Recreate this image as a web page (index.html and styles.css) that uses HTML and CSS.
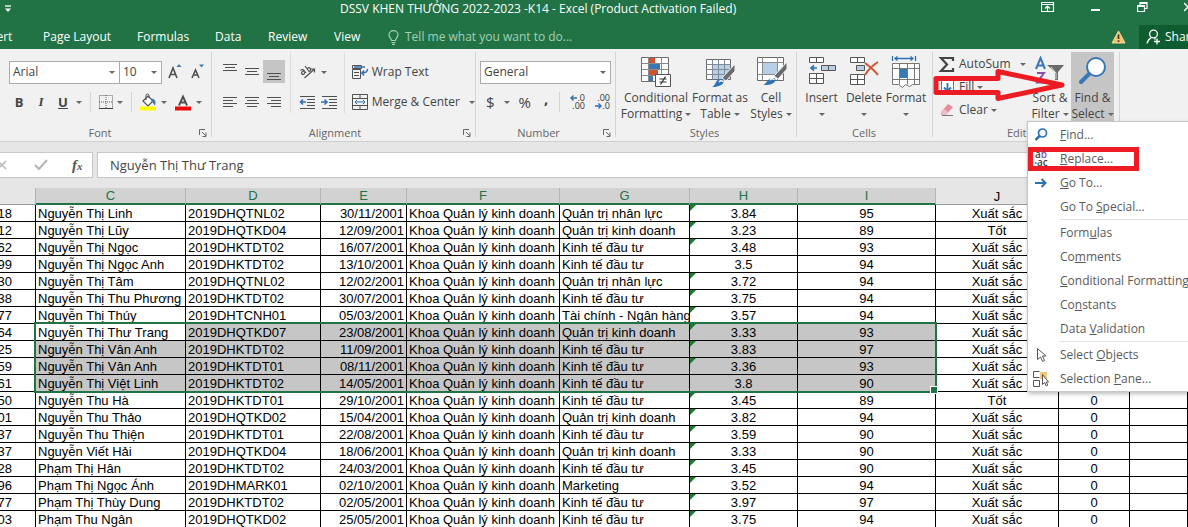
FILE: index.html
```html
<!DOCTYPE html>
<html lang="vi">
<head>
<meta charset="utf-8">
<title>DSSV KHEN THƯỞNG 2022-2023 -K14 - Excel</title>
<link rel="stylesheet" href="styles.css">
</head>
<body>
<header class="top">
  <div class="titlebar">
    <button class="bare qat" aria-label="Customize Quick Access Toolbar"><svg width="8" height="8" viewBox="0 0 8 8"><path d="M1 1h6" stroke="#fff" stroke-width="1.3"/><path d="M1 3.500h6L4 7z" fill="#fff"/></svg></button>
    <h1 class="title">DSSV KHEN THƯỞNG 2022-2023 -K14 - Excel (Product Activation Failed)</h1>
    <div class="winbtns">
      <button class="bare" aria-label="Ribbon display options"><svg width="14" height="12" viewBox="0 0 14 12" fill="none" stroke="#fff"><path d="M.5 1.500h12v9h-12zM.5 3.500h12M6.500 10V5.500M4 7.500l2.500-2.500L9 7.500" stroke-width="1.200"/></svg></button>
      <button class="bare" aria-label="Minimize"><svg width="10" height="12" viewBox="0 0 10 12"><path d="M0 9h9" stroke="#fff" stroke-width="2"/></svg></button>
      <button class="bare" aria-label="Restore"><svg width="11" height="12" viewBox="0 0 11 12" fill="none" stroke="#fff"><path d="M.5 4.500h7v6h-7zM.5 5.500h7M3 4V1.500h7v6H8M3 2.500h7" stroke-width="1.200"/></svg></button>
      <button class="bare" aria-label="Close"><svg width="10" height="12" viewBox="0 0 10 12"><path d="M0 2l8 8M8 2l-8 8" stroke="#fff" stroke-width="1.500"/></svg></button>
    </div>
  </div>
  <nav class="tabs">
    <a class="t-insert" href="#">Insert</a><a class="t-layout" href="#">Page Layout</a><a class="t-formulas" href="#">Formulas</a><a class="t-data" href="#">Data</a><a class="t-review" href="#">Review</a><a class="t-view" href="#">View</a>
    <button class="bare tellme"><svg width="11" height="15" viewBox="0 0 11 15" fill="none" stroke="#a6cfb5"><path d="M3.500 10.500C3.500 8.500 1 7.500 1 4.800a4.500 4.200 0 0 1 9 0c0 2.700-2.500 3.700-2.500 5.700zM3.500 12.500h4M4 14.300h3" stroke-width="1.200"/></svg>Tell me what you want to do...</button>
    <div class="account">
      <svg class="warn" width="15" height="14" viewBox="0 0 15 14"><path d="M7.500 1l6.500 12H1z" fill="#f2c572" stroke="#f6d79b"/><path d="M7.500 4.500v4.500M7.500 10.200v1.700" stroke="#4b3b22" stroke-width="1.700"/></svg>
      <button class="share"><svg width="15" height="16" viewBox="0 0 15 16" fill="none" stroke="#fff" stroke-width="1.300"><circle cx="7.500" cy="5" r="3.900"/><path d="M5.500 8.500C3 10 1.500 11.500 1 14.500M8.500 9.500l1 1M8 12.500h6M11 9.500v6"/></svg>Share</button>
    </div>
  </nav>
</header>

<section class="ribbon">
  <div class="group g-font">
    <div class="row row1">
      <button class="combo fontname">Arial<i class="dd"></i></button><button class="combo fontsize">10<i class="dd"></i></button>
      <button class="bare grow" aria-label="Increase font size"><svg width="14" height="18" viewBox="0 0 14 18"><path d="M1 15L5 5l4 10M2.500 11.500h5" fill="none" stroke="#505050" stroke-width="1.600"/><path d="M8.500 4L11 1l2.500 3z" fill="#3a78b5"/></svg></button>
      <button class="bare shrink" aria-label="Decrease font size"><svg width="14" height="18" viewBox="0 0 14 18"><path d="M1 15l3.500-8L8 15M2.200 12h4.600" fill="none" stroke="#505050" stroke-width="1.600"/><path d="M8 1.500h5L10.500 4.500z" fill="#3a78b5"/></svg></button>
    </div>
    <div class="row row2">
      <button class="bare ltr b">B</button><button class="bare ltr it">I</button><button class="bare ltr u">U</button><i class="dd"></i>
      <i class="vr"></i>
      <button class="bare" aria-label="Borders"><svg width="14" height="14" viewBox="0 0 14 14" fill="none" stroke="#606060"><path d="M.5.5h13v13H.5zM7 0v13M0 7h13" stroke-dasharray="1 1"/><path d="M0 13.500h14" stroke="#404040"/></svg></button><i class="dd"></i>
      <i class="vr"></i>
      <button class="bare" aria-label="Fill color"><svg width="17" height="18" viewBox="0 0 17 18"><path d="M3 8l5-5 5 5-5 5z" fill="#fff" stroke="#505050" stroke-width="1.200"/><path d="M6 7V2.500a1.500 1.500 0 0 1 3 0V5" fill="none" stroke="#505050"/><path d="M11.500 5.500c3 0 5 3 3.500 7-1.500-1-1.500-3-3.500-4z" fill="#3a78b5"/><path d="M0 13.500h16v4H0z" fill="#ff0"/></svg></button><i class="dd"></i>
      <button class="bare" aria-label="Font color"><svg width="17" height="18" viewBox="0 0 17 18"><path d="M4 12.500L8 3.500l4 9M5.500 9.500h5" fill="none" stroke="#505050" stroke-width="1.900"/><path d="M0 13.500h16v4H0z" fill="#e80c0c"/></svg></button><i class="dd"></i>
    </div>
    <div class="label">Font</div>
    <button class="bare launch" aria-label="Font settings"><svg width="8" height="8" viewBox="0 0 8 8" fill="none" stroke="#666"><path d="M.5 6V.5H6M3 3l4 4M7 3.500V7.500H3.500"/></svg></button>
  </div>

  <div class="group g-align">
    <div class="cols">
      <div class="grid3">
        <button class="bare ic" aria-label="Top align"><svg width="15" height="16" viewBox="0 0 15 16" stroke="#505050"><path d="M0 .5h14M2 3.500h10M0 6.500h14"/></svg></button>
        <button class="bare ic" aria-label="Middle align"><svg width="15" height="16" viewBox="0 0 15 16" stroke="#505050"><path d="M0 4.500h14M2 7.500h10M0 10.500h14"/></svg></button>
        <button class="bare ic on" aria-label="Bottom align"><svg width="15" height="16" viewBox="0 0 15 16" stroke="#505050"><path d="M0 9.500h14M2 12.500h10M0 15.500h14"/></svg></button>
        <button class="bare ic" aria-label="Align left"><svg width="15" height="12" viewBox="0 0 15 12" stroke="#505050"><path d="M0 1.500h14M0 4.500h10M0 7.500h14M0 10.500h10"/></svg></button>
        <button class="bare ic" aria-label="Center"><svg width="15" height="12" viewBox="0 0 15 12" stroke="#505050"><path d="M0 1.500h14M2 4.500h10M0 7.500h14M2 10.500h10"/></svg></button>
        <button class="bare ic" aria-label="Align right"><svg width="15" height="12" viewBox="0 0 15 12" stroke="#505050"><path d="M0 1.500h14M4 4.500h10M0 7.500h14M4 10.500h10"/></svg></button>
      </div>
      <div class="orient">
        <div class="row row1"><button class="bare" aria-label="Orientation"><svg width="17" height="16" viewBox="0 0 17 16" fill="none" stroke="#505050" stroke-width="1.200"><path d="M1.500 6.500c1.500-1.700 3-1 4 .5l1.500 2M5 7C2.500 7.500 2 9 3 10s3 .3 2.500-2M6 2l4.500 6M8 5c1.200-2 3-1.500 3.500-.3.500 1.300-.2 2.800-2 2.600M5.500 14L15 5.500M15.500 8.500V5H12"/></svg></button><i class="dd"></i></div>
        <div class="row row2"><button class="bare" aria-label="Decrease indent"><svg width="17" height="14" viewBox="0 0 17 14" stroke="#505050" fill="none"><path d="M1 1.500h15M8 4.500h8M8 7.500h8M8 10.500h8M1 13.500h15"/><path d="M7 7H1M4 4.500L1.500 7 4 9.500" stroke="#2f72b4" stroke-width="1.600"/></svg></button><button class="bare" aria-label="Increase indent"><svg width="17" height="14" viewBox="0 0 17 14" stroke="#505050" fill="none"><path d="M1 1.500h15M8 4.500h8M8 7.500h8M8 10.500h8M1 13.500h15"/><path d="M0 7h6M3.500 4.500L6 7 3.500 9.500" stroke="#2f72b4" stroke-width="1.600"/></svg></button></div>
      </div>
      <div class="wrapcol">
        <div class="row row1"><button class="bare txt"><svg width="17" height="16" viewBox="0 0 17 16" fill="none" stroke="#505050"><path d="M.5 1.500h9v3h-9zM.5 5.500h8v9h-8zM2 8.500h5M2 11.500h5"/><path d="M2 3h11M15.500 5c0 3-1.500 4-5.500 4M12 6.500L9.800 9l2.200 2.500" stroke="#2f72b4" stroke-width="1.400"/></svg>Wrap Text</button></div>
        <div class="row row2"><button class="bare txt"><svg width="17" height="16" viewBox="0 0 17 16" fill="none" stroke="#505050"><path d="M.5.5h15v15H.5zM.5 4.500h15M.5 11.500h15M8 .5v4M8 11.500v4"/><path d="M3 8h10M5 6L3 8l2 2M11 6l2 2-2 2" stroke="#2f72b4"/></svg>Merge &amp; Center<i class="dd"></i></button></div>
      </div>
    </div>
    <div class="label">Alignment</div>
    <button class="bare launch" aria-label="Alignment settings"><svg width="8" height="8" viewBox="0 0 8 8" fill="none" stroke="#666"><path d="M.5 6V.5H6M3 3l4 4M7 3.500V7.500H3.500"/></svg></button>
  </div>

  <div class="group g-number">
    <div class="row row1"><button class="combo format">General<i class="dd"></i></button></div>
    <div class="row row2">
      <button class="bare sym">$</button><i class="dd"></i><button class="bare sym pct">%</button><button class="bare sym comma">,</button>
      <i class="vr"></i>
      <button class="bare dec" aria-label="Increase decimal"><span class="d1"><svg width="7" height="6" viewBox="0 0 7 6" fill="none" stroke="#2f72b4" stroke-width="1.400"><path d="M7 3H1M3.500.5L1 3l2.500 2.500"/></svg>.0</span><span>.00</span></button>
      <button class="bare dec" aria-label="Decrease decimal"><span>.00</span><span class="d1"><svg width="7" height="6" viewBox="0 0 7 6" fill="none" stroke="#2f72b4" stroke-width="1.400"><path d="M0 3h6M3.500.5L6 3 3.500 5.500"/></svg>.0</span></button>
    </div>
    <div class="label">Number</div>
    <button class="bare launch" aria-label="Number settings"><svg width="8" height="8" viewBox="0 0 8 8" fill="none" stroke="#666"><path d="M.5 6V.5H6M3 3l4 4M7 3.500V7.500H3.500"/></svg></button>
  </div>

  <div class="group g-styles">
    <div class="bigs">
      <button class="bare big w-cond"><svg width="32" height="32" viewBox="0 0 32 32"><path d="M1.500 1.500h27v24h-27z" fill="#fff" stroke="#6a6a6a"/><path d="M1.500 7.500h27M1.500 13.500h27M1.500 19.500h27M8.500 1.500v24M21.500 1.500v24" stroke="#8a8a8a"/><path d="M9 2h6v5H9zM9 14h9v5H9z" fill="#d2512e"/><path d="M9 8h11v5H9zM9 20h4v5H9z" fill="#3a78b5"/><path d="M15.500 18.500h15v12h-15z" fill="#fff" stroke="#555"/><path d="M19.500 23h7M19.500 26h7M25.500 20.500l-5 8" stroke="#333" stroke-width="1.200"/></svg><span>Conditional</span><span>Formatting<i class="dd"></i></span></button>
      <button class="bare big w-tbl"><svg width="32" height="32" viewBox="0 0 32 32"><path d="M2.500 3.500h24v20h-24z" fill="#fff" stroke="#6a6a6a"/><path d="M9 9h17v14H9z" fill="#b9cfe6"/><path d="M2.500 8.500h24M2.500 13.500h24M2.500 18.500h24M8.500 3.500v20M14.500 3.500v20M20.500 3.500v20" stroke="#7d8b99"/><path d="M31 8v7l-9 10-4-3z" fill="#6b6b6b" stroke="#f1f1f1"/><path d="M8 31c4-1 3-8 9-8 5 0 4 8-9 8z" fill="#2f72b4"/><path d="M15 26c2-2 4-1 4 0" fill="none" stroke="#fff" stroke-width="1.500"/></svg><span>Format as</span><span>Table<i class="dd"></i></span></button>
      <button class="bare big w-cell"><svg width="32" height="32" viewBox="0 0 32 32"><path d="M2.500 1.500h26v23h-26z" fill="#fff" stroke="#6a6a6a"/><path d="M2.500 6.500h26M2.500 18.500h26M7.500 1.500v23M22.500 1.500v23" stroke="#8a8a8a"/><path d="M8 7h14v11H8z" fill="#b9cfe6"/><path d="M32 6v7l-9 10-4-3z" fill="#6b6b6b" stroke="#f1f1f1"/><path d="M8 29c4-1 4-7 10-7 5 0 3 8-10 7z" fill="#2f72b4"/><path d="M15 24c2-2 4-1 4 0" fill="none" stroke="#fff" stroke-width="1.500"/></svg><span>Cell</span><span>Styles<i class="dd"></i></span></button>
    </div>
    <div class="label">Styles</div>
  </div>

  <div class="group g-cells">
    <div class="bigs">
      <button class="bare big w-ins"><svg width="32" height="32" viewBox="0 0 32 32"><path d="M3.500 1.500h14v5h-14zM10.500 1.500v5M3.500 17.500h14v10h-14zM10.500 17.500v10M3.500 22.500h14" fill="#fff" stroke="#555"/><path d="M15.500 9.500h14v5h-14zM22.500 9.500v5" fill="#b9cfe6" stroke="#555"/><path d="M11 12H5M8 9.500L5 12l3 2.500" fill="none" stroke="#2f72b4" stroke-width="1.700"/></svg><span>Insert</span><i class="dd"></i></button>
      <button class="bare big w-del"><svg width="32" height="32" viewBox="0 0 32 32"><path d="M2.500 1.500h14v5h-14zM9.500 1.500v5M2.500 18.500h14v10h-14zM9.500 18.500v10M2.500 23.500h14" fill="#fff" stroke="#555"/><path d="M8.500 9.500h8v5h-8z" fill="#b9cfe6" stroke="#555"/><path d="M17 7c4 3 9 7 13 12M30 6c-5 3-10 8-13 13" fill="none" stroke="#d2512e" stroke-width="2"/></svg><span>Delete</span><i class="dd"></i></button>
      <button class="bare big w-fmt"><svg width="32" height="32" viewBox="0 0 32 32"><path d="M2.500 0v5M25.500 0v5M5 2.500h18M7.500.5L5 2.500l2.500 2M20.500.5l2.500 2-2.500 2" fill="none" stroke="#2f72b4" stroke-width="1.300"/><path d="M2.500 7.500h27v21h-7l-3 2-4-2-3 3-4-3h-6z" fill="#fff" stroke="#777"/><path d="M2.500 12.500h27M2.500 23.500h27M9.500 7.500v21M17.500 7.500v21M24.500 7.500v21" stroke="#777"/><path d="M10 13h7v9h-7z" fill="#3a78b5"/></svg><span>Format</span><i class="dd"></i></button>
    </div>
    <div class="label">Cells</div>
  </div>

  <div class="group g-edit">
    <div class="cols">
      <div class="edcol">
        <button class="bare txt"><svg width="18" height="17" viewBox="0 0 18 17"><path d="M15 5V2H3l6 6.500L3 15h12v-3" fill="none" stroke="#444" stroke-width="2.200"/></svg>AutoSum<i class="dd far"></i></button>
        <button class="bare txt"><svg width="18" height="14" viewBox="0 0 18 14"><path d="M3.500.5h12v13h-12z" fill="#fff" stroke="#777"/><path d="M9.500 3v8M6 7.500L9.500 11 13 7.500" fill="none" stroke="#2f72b4" stroke-width="1.800"/></svg>Fill<i class="dd"></i></button>
        <button class="bare txt"><svg width="18" height="14" viewBox="0 0 18 14"><path d="M3 9l7-8 5 3-7 8-5 0z" fill="#e88b9c"/><path d="M3 9l2.500-3 5 3L8 12H4z" fill="#f3bcc6"/><path d="M4 12.500h11" stroke="#777"/></svg>Clear<i class="dd"></i></button>
      </div>
      <button class="bare big w-sort"><svg width="32" height="32" viewBox="0 0 32 32"><path d="M2 13L6.500 2 11 13M3.500 9.500h6" fill="none" stroke="#3a78b5" stroke-width="2"/><path d="M3 17h7L3 26.500h7" fill="none" stroke="#8a4fb0" stroke-width="2"/><path d="M13 9h17l-6 7v8h-3v-8z" fill="#6b6b6b"/><path d="M17 11l5 6v6" fill="none" stroke="#ddd"/></svg><span>Sort &amp;</span><span>Filter<i class="dd"></i></span></button>
      <div class="findwrap">
        <button class="bare big w-find"><svg width="32" height="32" viewBox="0 0 32 32"><circle cx="19" cy="11" r="9" fill="#fff" stroke="#3a78b5" stroke-width="2"/><path d="M12 18l-8 8" stroke="#3a78b5" stroke-width="4" stroke-linecap="round"/></svg><span>Find &amp;</span><span>Select<i class="dd"></i></span></button>
        <div class="menu" role="menu">
          <button class="item"><svg width="16" height="16" viewBox="0 0 16 16"><circle cx="9.500" cy="6" r="4" fill="#fff" stroke="#2f72b4" stroke-width="1.700"/><path d="M6.500 9l-4 4" stroke="#2f72b4" stroke-width="2.500"/></svg><span><u>F</u>ind...</span></button>
          <button class="item"><span class="redbox"></span><span class="abac"><span>a<b>b</b></span><span><i>•</i>ac</span></span><span><u>R</u>eplace...</span></button>
          <button class="item"><svg width="16" height="16" viewBox="0 0 16 16"><path d="M2 8h10M8.500 4l4 4-4 4" fill="none" stroke="#2f72b4" stroke-width="2"/></svg><span><u>G</u>o To...</span></button>
          <button class="item"><span class="noicon"></span><span>Go To <u>S</u>pecial...</span></button>
          <hr>
          <button class="item"><span class="noicon"></span><span>Form<u>u</u>las</span></button>
          <button class="item"><span class="noicon"></span><span>Co<u>m</u>ments</span></button>
          <button class="item"><span class="noicon"></span><span><u>C</u>onditional Formatting</span></button>
          <button class="item"><span class="noicon"></span><span>Co<u>n</u>stants</span></button>
          <button class="item"><span class="noicon"></span><span>Data <u>V</u>alidation</span></button>
          <hr>
          <button class="item"><svg width="16" height="16" viewBox="0 0 16 16"><path d="M4.500 1.500v11l3-2.500 2 4.500 2-1-2-4.500h3.500z" fill="#fff" stroke="#555"/></svg><span>Select <u>O</u>bjects</span></button>
          <button class="item"><svg width="16" height="16" viewBox="0 0 16 16"><path d="M6.500.5h-6v6h6M.5 9.500h6v6h-6z" fill="#fff" stroke="#555"/><path d="M7 1h7v7H7z" fill="#f0c97c"/><path d="M9.500 3.500v10l2.200-2 1.500 3.500 1.500-.8-1.400-3.200h2.200z" fill="#fff" stroke="#555"/></svg><span>Selection <u>P</u>ane...</span></button>
        </div>
      </div>
    </div>
    <div class="label">Editing</div>
    <svg class="arrow" width="136" height="34" viewBox="0 0 136 34"><path d="M3 10.500h62V3.500L129 17 65 30.500v-6H3z" fill="none" stroke="#ed1c24" stroke-width="5" stroke-linejoin="round"/></svg>
  </div>
</section>

<section class="fbar">
  <div class="fbtns">
    <button class="bare" aria-label="Cancel"><svg width="14" height="14" viewBox="0 0 14 14"><path d="M2 3l8 8M10 3l-8 8" stroke="#b5b5b5" stroke-width="1.500"/></svg></button>
    <button class="bare" aria-label="Enter"><svg width="14" height="14" viewBox="0 0 14 14"><path d="M1 7l4 4 8-9" fill="none" stroke="#b5b5b5" stroke-width="2"/></svg></button>
    <button class="bare fx" aria-label="Insert function">f<small>x</small></button>
  </div>
  <input class="finput" aria-label="Formula bar" value="Nguyễn Thị Thư Trang">
</section>

<main class="sheet">
<table>
<colgroup><col class="cB"><col class="cC"><col class="cD"><col class="cE"><col class="cF"><col class="cG"><col class="cH"><col class="cI"><col class="cJ"><col class="cK"><col></colgroup>
<thead><tr><th></th><th class="s">C</th><th class="s">D</th><th class="s">E</th><th class="s">F</th><th class="s">G</th><th class="s">H</th><th class="s">I</th><th>J</th><th></th><th></th></tr></thead>
<tbody>
<tr><td>18</td><td>Nguyễn Thị Linh</td><td>2019DHQTNL02</td><td>30/11/2001</td><td>Khoa Quản lý kinh doanh</td><td>Quản trị nhân lực</td><td class="e">3.84</td><td>95</td><td>Xuất sắc</td><td></td><td></td></tr>
<tr><td>12</td><td>Nguyễn Thị Lũy</td><td>2019DHQTKD04</td><td>12/09/2001</td><td>Khoa Quản lý kinh doanh</td><td>Quản trị kinh doanh</td><td class="e">3.23</td><td>89</td><td>Tốt</td><td></td><td></td></tr>
<tr><td>62</td><td>Nguyễn Thị Ngọc</td><td>2019DHKTDT02</td><td>16/07/2001</td><td>Khoa Quản lý kinh doanh</td><td>Kinh tế đầu tư</td><td class="e">3.48</td><td>93</td><td>Xuất sắc</td><td></td><td></td></tr>
<tr><td>99</td><td>Nguyễn Thị Ngọc Anh</td><td>2019DHKTDT02</td><td>13/10/2001</td><td>Khoa Quản lý kinh doanh</td><td>Kinh tế đầu tư</td><td>3.5</td><td>94</td><td>Xuất sắc</td><td></td><td></td></tr>
<tr><td>30</td><td>Nguyễn Thị Tâm</td><td>2019DHQTNL02</td><td>12/02/2001</td><td>Khoa Quản lý kinh doanh</td><td>Quản trị nhân lực</td><td class="e">3.72</td><td>94</td><td>Xuất sắc</td><td></td><td></td></tr>
<tr><td>38</td><td>Nguyễn Thị Thu Phương</td><td>2019DHKTDT02</td><td>30/07/2001</td><td>Khoa Quản lý kinh doanh</td><td>Kinh tế đầu tư</td><td class="e">3.75</td><td>94</td><td>Xuất sắc</td><td></td><td></td></tr>
<tr><td>77</td><td>Nguyễn Thị Thúy</td><td>2019DHTCNH01</td><td>05/03/2001</td><td>Khoa Quản lý kinh doanh</td><td>Tài chính - Ngân hàng</td><td class="e">3.57</td><td>94</td><td>Xuất sắc</td><td></td><td></td></tr>
<tr class="sel"><td>64</td><td class="active">Nguyễn Thị Thư Trang</td><td>2019DHQTKD07</td><td>23/08/2001</td><td>Khoa Quản lý kinh doanh</td><td>Quản trị kinh doanh</td><td class="e">3.33</td><td>93</td><td>Xuất sắc</td><td></td><td></td></tr>
<tr class="sel"><td>25</td><td>Nguyễn Thị Vân Anh</td><td>2019DHKTDT02</td><td>11/09/2001</td><td>Khoa Quản lý kinh doanh</td><td>Kinh tế đầu tư</td><td class="e">3.83</td><td>97</td><td>Xuất sắc</td><td></td><td></td></tr>
<tr class="sel"><td>59</td><td>Nguyễn Thị Vân Anh</td><td>2019DHKTDT01</td><td>08/11/2001</td><td>Khoa Quản lý kinh doanh</td><td>Kinh tế đầu tư</td><td class="e">3.36</td><td>93</td><td>Xuất sắc</td><td></td><td></td></tr>
<tr class="sel"><td>61</td><td>Nguyễn Thị Việt Linh</td><td>2019DHKTDT02</td><td>14/05/2001</td><td>Khoa Quản lý kinh doanh</td><td>Kinh tế đầu tư</td><td>3.8</td><td>90</td><td>Xuất sắc</td><td></td><td></td></tr>
<tr><td>50</td><td>Nguyễn Thu Hà</td><td>2019DHKTDT01</td><td>29/10/2001</td><td>Khoa Quản lý kinh doanh</td><td>Kinh tế đầu tư</td><td class="e">3.45</td><td>89</td><td>Tốt</td><td>0</td><td></td></tr>
<tr><td>01</td><td>Nguyễn Thu Thảo</td><td>2019DHQTKD02</td><td>15/04/2001</td><td>Khoa Quản lý kinh doanh</td><td>Quản trị kinh doanh</td><td class="e">3.82</td><td>94</td><td>Xuất sắc</td><td>0</td><td></td></tr>
<tr><td>37</td><td>Nguyễn Thu Thiện</td><td>2019DHKTDT01</td><td>22/08/2001</td><td>Khoa Quản lý kinh doanh</td><td>Kinh tế đầu tư</td><td class="e">3.59</td><td>90</td><td>Xuất sắc</td><td>0</td><td></td></tr>
<tr><td>37</td><td>Nguyễn Viết Hải</td><td>2019DHQTKD04</td><td>18/06/2001</td><td>Khoa Quản lý kinh doanh</td><td>Quản trị kinh doanh</td><td class="e">3.33</td><td>90</td><td>Xuất sắc</td><td>0</td><td></td></tr>
<tr><td>28</td><td>Phạm Thị Hân</td><td>2019DHKTDT02</td><td>24/03/2001</td><td>Khoa Quản lý kinh doanh</td><td>Kinh tế đầu tư</td><td class="e">3.45</td><td>90</td><td>Xuất sắc</td><td>0</td><td></td></tr>
<tr><td>96</td><td>Phạm Thị Ngọc Ánh</td><td>2019DHMARK01</td><td>02/10/2001</td><td>Khoa Quản lý kinh doanh</td><td>Marketing</td><td class="e">3.52</td><td>94</td><td>Xuất sắc</td><td>0</td><td></td></tr>
<tr><td>77</td><td>Phạm Thị Thùy Dung</td><td>2019DHKTDT02</td><td>02/05/2001</td><td>Khoa Quản lý kinh doanh</td><td>Kinh tế đầu tư</td><td class="e">3.97</td><td>97</td><td>Xuất sắc</td><td>0</td><td></td></tr>
<tr><td>03</td><td>Phạm Thu Ngân</td><td>2019DHQTKD02</td><td>25/05/2001</td><td>Khoa Quản lý kinh doanh</td><td>Kinh tế đầu tư</td><td class="e">3.75</td><td>94</td><td>Xuất sắc</td><td>0</td><td></td></tr>
</tbody>
</table>
<div class="selection"></div>
</main>
</body>
</html>
```
FILE: styles.css
```css
* { box-sizing: border-box; }
body { margin: 0; min-height: 100vh; overflow: hidden; background: #e6e6e6; color: #444; font: 12px/16px "Open Sans", "Noto Sans", sans-serif; }
button, input { font: inherit; color: inherit; }
svg { display: block; flex: none; }
.bare { display: flex; flex: none; align-items: center; padding: 0; border: 0; background: none; }

/* title bar and tabs */
.top { background: #217346; color: #fff; }
.titlebar { display: grid; grid-template-columns: 340px 1fr auto; align-items: center; height: 18px; }
.qat { padding-left: 4px; }
.title { margin: 0; font-size: 12px; font-weight: 400; white-space: nowrap; }
.winbtns { display: flex; gap: 36px; margin-right: -6px; padding-bottom: 4px; }
.tabs { display: flex; align-items: center; height: 31px; padding-top: 7px; overflow: hidden; }
.tabs a { flex: none; color: #fff; text-decoration: none; }
.t-insert { width: 63px; margin-left: -20px; }
.t-layout { width: 94px; }
.t-formulas { width: 78px; }
.t-data { width: 53px; }
.t-review { width: 66px; }
.t-view { width: 54px; }
.tellme { gap: 6px; color: #a6cfb5; white-space: nowrap; }
.account { display: flex; align-items: center; gap: 13px; margin-left: auto; }
.share { display: flex; align-items: center; gap: 4px; width: 68px; height: 24px; margin-right: -19px; padding: 0 0 0 7px; border: 0; background: #0e5c2f; }

/* ribbon */
.ribbon { display: flex; height: 93px; padding-top: 3px; border-bottom: 1px solid #d0d0d0; background: #f1f1f1; }
.group { position: relative; display: flex; flex-direction: column; flex: none; margin-bottom: 4px; border-right: 1px solid #d4d4d4; }
.g-font { width: 212px; padding-left: 9px; }
.g-align { width: 264px; padding-left: 7px; }
.g-number { width: 140px; padding-left: 4px; }
.g-styles { width: 181px; padding-left: 5px; }
.g-cells { width: 136px; padding-left: 3px; }
.g-edit { width: 187px; padding-left: 5px; }
.label { margin: auto 0 -4px; text-align: center; color: #666; font-size: 11px; }
.g-font .label { padding-right: 20px; }
.g-align .label { padding-right: 24px; }
.g-number .label { padding-right: 18px; }
.g-styles .label { padding-right: 8px; }
.g-cells .label { padding-right: 4px; }
.launch { position: absolute; right: 4px; bottom: 0; }
.dd { display: inline-block; flex: none; width: 0; height: 0; border: 3px solid transparent; border-top-color: #666; border-bottom: 0; }
.vr { width: 1px; height: 20px; background: #d4d4d4; }
.row { display: flex; align-items: center; }
.row1 { height: 24px; margin-top: 8px; }
.row2 { height: 22px; margin-top: 7px; }
.combo { display: flex; align-items: center; justify-content: space-between; height: 23px; padding: 0 4px 0 3px; border: 1px solid #ababab; background: #fff; }
.fontname { width: 111px; }
.fontsize { width: 43px; margin-left: -1px; }
.format { width: 131px; }
.grow { margin-left: 6px; }
.shrink { margin-left: 9px; }
.g-font .row2 { gap: 8px; padding-left: 5px; }
.g-font .row2 .dd { margin-left: -4px; }
.g-font .row2 .u + .dd { margin-left: 0; }
.ltr { justify-content: center; width: 10px; font-size: 13px; font-weight: 700; }
.ltr + .ltr { margin-left: 4px; }
.it { font-family: "Liberation Serif", serif; font-style: italic; }
.u { text-decoration: underline; }
.cols { display: flex; }
.grid3 { display: grid; grid-template-columns: repeat(3, 22px); grid-template-rows: 23px 22px; row-gap: 8px; margin-top: 8px; }
.ic { justify-content: center; }
.on { background: #c5c5c5; }
.orient { width: 62px; margin-left: 5px; padding-left: 8px; border-left: 1px solid #dcdcdc; }
.orient .row { gap: 5px; }
.wrapcol { padding-left: 7px; border-left: 1px solid #dcdcdc; }
.txt { gap: 3px; white-space: nowrap; }
.wrapcol .dd { margin-left: 6px; }
.g-number .row2 { gap: 9px; padding-left: 6px; }
.sym { font-size: 15px; }
.comma { width: 10px; padding: 0 0 8px 4px; font-weight: 700; }
.dec { flex-direction: column; align-items: flex-end; width: 16px; font-size: 9px; line-height: 8px; color: #333; }
.d1 { display: flex; align-items: center; }
.bigs { display: flex; }
.big { flex-direction: column; height: 70px; padding-top: 4px; white-space: nowrap; }
.big span { display: flex; align-items: center; gap: 3px; height: 16px; }
.big svg { margin-bottom: 2px; }
.big > .dd { margin-top: 7px; }
.w-cond { width: 70px; }
.w-tbl { width: 58px; }
.w-cell { width: 44px; }
.w-ins { width: 43px; }
.w-del, .w-fmt { width: 42px; }
.w-sort { width: 42px; }
.edcol { display: flex; flex-direction: column; flex: none; gap: 7px; width: 91px; padding-top: 4px; }
.edcol .txt { height: 16px; }
.edcol .far { margin-left: 6px; }
.findwrap { position: relative; }
.w-find { width: 43px; background: #c5c5c5; }
.g-edit .label { padding-right: 8px; }
.arrow { position: absolute; left: 0; top: 16px; z-index: 3; }

/* find & select menu */
.menu { position: absolute; z-index: 2; left: -44px; top: 69px; width: 182px; padding: 1px 0 0; border: 1px solid #c6c6c6; background: #fff; box-shadow: 1px 2px 4px rgba(0, 0, 0, .25); }
.item { position: relative; display: flex; align-items: center; gap: 11px; width: 100%; height: 24px; padding: 0 0 0 5px; border: 0; background: none; color: #5a5a5a; white-space: nowrap; }
.noicon { width: 16px; }
.menu hr { height: 1px; margin: 0 0 1px 32px; border: 0; background: #e1e1e1; }
.redbox { position: absolute; left: 0; top: 0; width: 111px; height: 24px; border: 5px solid #ed1c24; }
.abac { position: relative; display: flex; flex-direction: column; width: 16px; font-size: 10px; font-weight: 600; line-height: 8px; color: #444; }
.abac b { color: #8a4fb0; font-weight: 600; }
.abac i { font-size: 7px; color: #2f72b4; }

/* formula bar */
.fbar { display: flex; gap: 4px; margin: 10px 0; height: 26px; }
.fbtns { display: flex; flex: none; align-items: center; gap: 24px; width: 93px; border: 1px solid #c8c8c8; border-left: 0; background: #fff; }
.fbtns .bare:first-child { margin-left: -4px; }
.fx { align-items: baseline; font: italic 700 15px/16px "Liberation Serif", serif; color: #555; }
.fx small { font-size: 11px; }
.finput { flex: 1; min-width: 0; padding: 0 12px; border: 1px solid #c8c8c8; border-right: 0; background: #fff; font-size: 13px; outline: 0; }

/* worksheet */
.sheet { position: relative; margin-left: -28px; font: 13px/16px "Liberation Sans", Arial, sans-serif; color: #000; }
table { width: 100%; table-layout: fixed; border-collapse: separate; border-spacing: 0; }
.cB { width: 64px; } .cC { width: 150px; } .cD { width: 135px; } .cE { width: 86px; } .cF { width: 153px; } .cG { width: 130px; }
.cH { width: 108px; } .cI { width: 138px; } .cJ { width: 123px; } .cK { width: 71px; }
th { height: 17px; padding: 0; border-right: 1px solid #b4b4b4; border-bottom: 1px solid #9a9a9a; background: #e6e6e6; font-weight: 400; line-height: 15px; }
th.s { border-bottom: 2px solid #217346; background: #d2d2d2; color: #217346; }
td { position: relative; height: 17px; padding: 1px 2px 0; border-right: 1px solid #000; border-bottom: 1px solid #000; background: #fff; text-align: center; line-height: 15px; white-space: nowrap; overflow: hidden; }
td:first-child { padding-right: 23px; text-align: right; }
td:nth-child(2), td:nth-child(3), td:nth-child(5), td:nth-child(6) { text-align: left; }
td:nth-child(4) { text-align: right; }
.sel td:nth-child(n+2):nth-child(-n+8):not(.active) { background: #c6c6c6; }
.e::before { content: ""; position: absolute; left: 0; top: 0; border: 3px solid #1b7a2b; border-right-color: transparent; border-bottom-color: transparent; }
.selection { position: absolute; left: 62px; top: 134px; width: 903px; height: 71px; border: 2px solid #217346; }
.selection::after { content: ""; position: absolute; right: -3px; bottom: -3px; width: 6px; height: 6px; border: 1px solid #fff; background: #217346; }
```
